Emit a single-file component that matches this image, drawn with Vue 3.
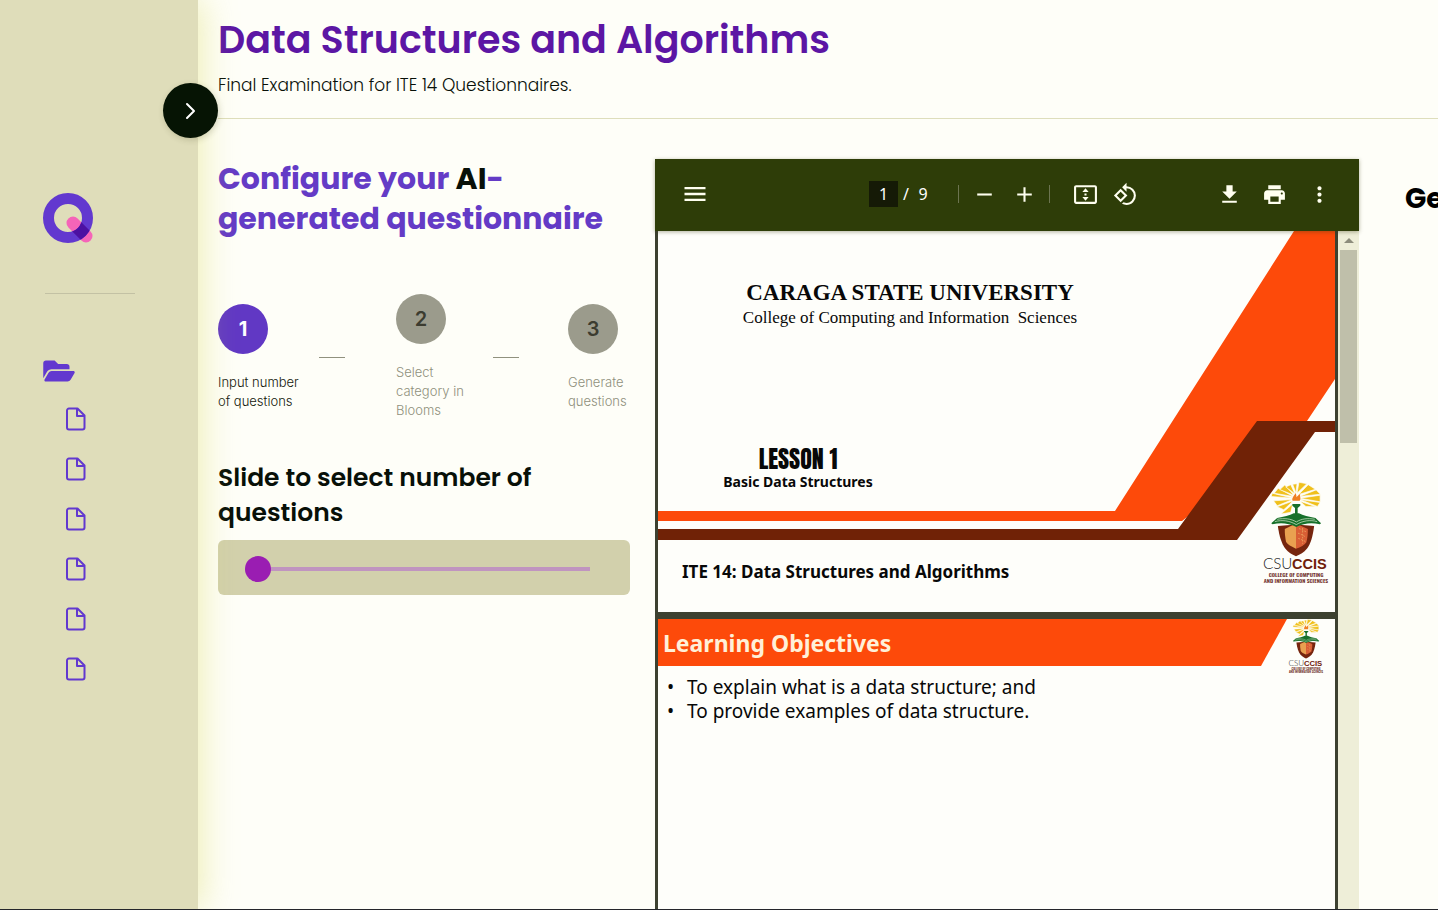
<script setup>
import { ref } from 'vue'

const questionCount = ref(0)
const pageNumber = ref('1')

const files = [1, 2, 3, 4, 5, 6]

const steps = [
  { number: 1, label: 'Input number\nof questions', active: true },
  { number: 2, label: 'Select\ncategory in\nBlooms', active: false },
  { number: 3, label: 'Generate\nquestions', active: false },
]

const objectives = [
  'To explain what is a data structure; and',
  'To provide examples of data structure.',
]
</script>

<template>
  <div class="shell">
    <svg class="defs" aria-hidden="true">
      <defs>
        <g id="emblem">
          <g fill="#f0c01c" stroke="#fefefa" stroke-width="2">
            <path d="M160 84 93 79l3-10z" />
            <path d="M160 79 102 69l12-15z" />
            <path d="M162 75 119 58l15-14z" />
            <path d="M165 71 137 50l15-7z" />
            <path d="M168 69 158 42l13-2z" />
            <path d="M171 69 177 36l24 4z" />
            <path d="M176 73 205 43l22 14z" />
            <path d="M178 79 229 59l13 13z" />
            <path d="M180 84 241 75v20z" />
            <path d="M180 88 241 97l-8 12z" />
            <path d="M180 93 228 110l-30-1z" />
            <path d="M158 88 100 92l11 15z" />
            <path d="M160 92 111 110l20 9z" />
            <path d="M158 102 122 132l30-5z" />
          </g>
          <path fill="#ef7f22" d="M158 92c-4-8 3-14 9-24 2 7 3 9 2 13 5-4 6-8 12-10-3 8 4 14-2 21z" />
          <path fill="#76250e" d="m113 168 56-4 54 4c-4 30-10 54-22 69-9 11-20 17-33 23-13-6-23-12-32-23-12-16-19-39-23-69z" />
          <path fill="#e9a050" d="m134 177 34-16v76c-14-6-26-12-30-20-3-13-4-27-4-40z" />
          <path fill="#d95e35" d="m168 161 36 16c0 14-1 28-5 41-5 8-17 14-31 19z" />
          <path fill="none" stroke="#f0b46a" stroke-width="2" stroke-dasharray="5 4" d="M177 176c10 3 15 8 23 10M174 190c10 3 16 8 25 12M175 206c8 2 14 6 21 9M188 174v48" />
          <path fill="#17702a" d="M157 102h24v5l-8 7v24h-8v-24l-8-7z" />
          <path fill="#17702a" d="m93 160 18-16c20-3 38-8 50-14h16c12 6 30 11 50 14l17 16-4 3c-24-6-48-4-71 8-24-12-48-14-72-8z" />
          <path fill="none" stroke="#e8f3dc" stroke-width="2" d="M104 155c22-6 44-3 65 9 20-12 42-15 63-9M111 148c22-4 42-2 58 8 16-10 34-12 56-8" />
        </g>
      </defs>
    </svg>

    <aside class="sidebar">
      <button class="toggle" type="button" aria-label="Expand sidebar">
        <svg width="11" height="18" viewBox="0 0 11 18" fill="none" stroke="#fff" stroke-width="2" stroke-linecap="round" stroke-linejoin="round"><path d="m2 2 7 7-7 7" /></svg>
      </button>
      <svg class="brand" width="52" height="52" viewBox="0 0 52 52" aria-hidden="true">
        <clipPath id="ring"><path clip-rule="evenodd" d="M26 1a25 25 0 1 1 0 50 25 25 0 0 1 0-50zm0 11a14 14 0 1 0 0 28 14 14 0 0 0 0-28z" /></clipPath>
        <path stroke="#f564b8" stroke-width="13" stroke-linecap="round" d="m31 31 13 13" />
        <circle cx="26" cy="26" r="19.5" fill="none" stroke="#6238cf" stroke-width="11" />
        <path clip-path="url(#ring)" stroke="#4c10a2" stroke-width="13" stroke-linecap="round" d="m31 31 13 13" />
      </svg>
      <hr class="rule" />
      <nav class="tree" aria-label="Files">
        <a class="folder" href="#" aria-label="Folder">
          <svg width="32" height="28" viewBox="0 0 576 512" fill="#6238cf"><path d="M572.694 292.093L500.27 416.248A63.997 63.997 0 0 1 444.989 448H45.025c-18.523 0-30.064-20.093-20.731-36.093l72.424-124.155A64 64 0 0 1 152 256h399.964c18.523 0 30.064 20.093 20.730 36.093zM152 224h328v-48c0-26.510-21.490-48-48-48H272l-64-64H48C21.490 64 0 85.490 0 112v278.046l69.077-118.418C86.214 242.250 117.989 224 152 224z" /></svg>
        </a>
        <a v-for="file in files" :key="file" class="file" href="#" :aria-label="'File ' + file">
          <svg width="20" height="24" viewBox="0 0 20 24" fill="none" stroke="#6238cf" stroke-width="2" stroke-linejoin="round"><path d="M3 1.500h8.500l7 7V20.500a2 2 0 0 1-2 2H3a2 2 0 0 1-2-2v-17a2 2 0 0 1 2-2zM11 1.500v7.500h7.500" /></svg>
        </a>
      </nav>
    </aside>

    <main class="main">
      <header class="header">
        <h1>Data Structures and Algorithms</h1>
        <p>Final Examination for ITE 14 Questionnaires.</p>
      </header>

      <div class="content">
        <section class="config">
          <h2>Configure your <span class="ink">AI</span>-<br />generated questionnaire</h2>
          <ol class="steps">
            <template v-for="step in steps" :key="step.number">
              <li class="step" :class="{ active: step.active }">
                <span class="bubble">{{ step.number }}</span>
                <span class="label">{{ step.label }}</span>
              </li>
              <li v-if="step.number < 3" class="dash" aria-hidden="true"></li>
            </template>
          </ol>
          <label class="prompt" for="count">Slide to select number of questions</label>
          <div class="slider">
            <input id="count" v-model="questionCount" type="range" min="0" max="50" />
          </div>
        </section>

        <section class="viewer" aria-label="Document">
          <div class="toolbar">
            <div class="tools">
              <button type="button" aria-label="Menu"><svg width="28" height="28" viewBox="0 0 24 24"><path d="M3 18h18v-2H3v2zm0-5h18v-2H3v2zm0-7v2h18V6H3z" /></svg></button>
            </div>
            <div class="tools">
              <input v-model="pageNumber" class="page-input" type="text" aria-label="Page number" />
              <span class="slash">/</span>
              <span class="total">9</span>
              <span class="divider"></span>
              <button type="button" aria-label="Zoom out"><svg width="25" height="25" viewBox="0 0 24 24"><path d="M19 13H5v-2h14z" /></svg></button>
              <button type="button" aria-label="Zoom in"><svg width="25" height="25" viewBox="0 0 24 24"><path d="M19 13h-6v6h-2v-6H5v-2h6V5h2v6h6z" /></svg></button>
              <span class="divider second"></span>
              <button type="button" aria-label="Fit to page"><svg width="25" height="25" viewBox="0 0 24 24"><path d="M21 3H3c-1.100 0-2 .9-2 2v14c0 1.100.9 2 2 2h18c1.100 0 2-.9 2-2V5c0-1.100-.9-2-2-2zm0 16H3V5h18v14zM12 6l-3 3.500h6zM12 18l3-3.500H9zM11 11h2v2h-2z" /></svg></button>
              <button type="button" aria-label="Rotate"><svg width="25" height="25" viewBox="0 0 24 24"><path d="M7.340 6.410.86 12.900l6.490 6.480 6.490-6.480-6.500-6.490zM3.690 12.900l3.660-3.660L11 12.900l-3.660 3.660-3.650-3.660zM19.360 6.640A8.950 8.950 0 0 0 13 4V.76L8.760 5 13 9.240V6c1.790 0 3.580.68 4.950 2.050a7.007 7.007 0 0 1 0 9.900 6.973 6.973 0 0 1-7.840 1.440l-1.490 1.490C10.020 21.620 11.510 22 13 22c2.300 0 4.610-.88 6.360-2.640a8.980 8.980 0 0 0 0-12.720z" /></svg></button>
            </div>
            <div class="tools end">
              <button type="button" aria-label="Download"><svg width="25" height="25" viewBox="0 0 24 24"><path d="M19 9h-4V3H9v6H5l7 7 7-7zM5 18v2h14v-2H5z" /></svg></button>
              <button type="button" aria-label="Print"><svg width="25" height="25" viewBox="0 0 24 24"><path d="M19 8H5c-1.660 0-3 1.340-3 3v6h4v4h12v-4h4v-6c0-1.660-1.340-3-3-3zm-3 11H8v-5h8v5zm3-7c-.55 0-1-.45-1-1s.45-1 1-1 1 .45 1 1-.45 1-1 1zm-1-9H6v4h12V3z" /></svg></button>
              <button type="button" aria-label="More"><svg width="25" height="25" viewBox="0 0 24 24"><path d="M12 8c1.100 0 2-.9 2-2s-.9-2-2-2-2 .9-2 2 .9 2 2 2zm0 2c-1.100 0-2 .9-2 2s.9 2 2 2 2-.9 2-2-.9-2-2-2zm0 6c-1.100 0-2 .9-2 2s.9 2 2 2 2-.9 2-2-.9-2-2-2z" /></svg></button>
            </div>
          </div>

          <div class="body">
            <div class="pages">
              <article class="slide">
                <svg class="art" viewBox="0 0 677 381" preserveAspectRatio="none" aria-hidden="true">
                  <path fill="#fd4a0a" d="M636 0h41v148l-28 42-125 100H0v-10h457z" />
                  <path fill="#702206" d="M0 298h520l79-108h78v11h-20l-78 108H0z" />
                </svg>
                <div class="masthead">
                  <strong>CARAGA STATE UNIVERSITY</strong>
                  <span>College of Computing and Information&nbsp; Sciences</span>
                </div>
                <div class="lesson">
                  <strong>LESSON 1</strong>
                  <span>Basic Data Structures</span>
                </div>
                <p class="course">ITE 14: Data Structures and Algorithms</p>
                <svg class="seal" viewBox="65 35 206 312">
                  <use href="#emblem" />
                  <text x="68" y="300" class="csu">CSU</text>
                  <text x="156" y="300" class="ccis">CCIS</text>
                  <text x="168" y="324" class="tiny">COLLEGE OF COMPUTING</text>
                  <text x="168" y="342" class="tiny">AND INFORMATION SCIENCES</text>
                </svg>
              </article>
              <article class="slide">
                <svg class="art" viewBox="0 0 677 381" preserveAspectRatio="none" aria-hidden="true">
                  <path fill="#fd4a0a" d="M0 0h629l-26 47H0z" />
                </svg>
                <h3>Learning Objectives</h3>
                <ul class="objectives">
                  <li v-for="item in objectives" :key="item">{{ item }}</li>
                </ul>
                <svg class="seal small" viewBox="65 35 206 312">
                  <use href="#emblem" />
                  <text x="68" y="300" class="csu">CSU</text>
                  <text x="156" y="300" class="ccis">CCIS</text>
                  <text x="168" y="324" class="tiny">COLLEGE OF COMPUTING</text>
                  <text x="168" y="342" class="tiny">AND INFORMATION SCIENCES</text>
                </svg>
              </article>
            </div>
            <div class="scroll" aria-hidden="true">
              <span class="arrow"></span>
              <span class="thumb"></span>
            </div>
          </div>
        </section>

        <section class="results">
          <h2>Ge</h2>
        </section>
      </div>
    </main>
  </div>
</template>

<style>
body {
  margin: 0;
  background: #fefef8;
}
</style>

<style scoped>
* {
  box-sizing: border-box;
}

.shell {
  display: flex;
  height: 100vh;
  overflow: hidden;
  border-bottom: 1px solid #25262b;
  background: #fefef8;
  font-family: Poppins, Inter, sans-serif;
  color: #081008;
}

.defs {
  position: absolute;
  width: 0;
  height: 0;
}

.sidebar {
  position: relative;
  z-index: 1;
  flex: none;
  width: 198px;
  padding: 192px 42px 0;
  background: #dfddba;
  box-shadow: 4px 0 32px rgba(215, 215, 80, 0.4);
}

.toggle {
  position: absolute;
  top: 83px;
  right: -20px;
  display: flex;
  align-items: center;
  justify-content: center;
  width: 55px;
  height: 55px;
  padding: 0;
  border: 0;
  border-radius: 50%;
  background: #061404;
  box-shadow: 1px 2px 6px rgba(60, 60, 20, 0.2);
}

.brand {
  display: block;
}

.rule {
  width: 90px;
  height: 1px;
  margin: 49px 0 0 3px;
  border: 0;
  background: #c3c1a4;
}

.tree {
  display: flex;
  flex-direction: column;
  align-items: flex-start;
  margin-top: 63px;
}

.folder {
  height: 28px;
  margin: 0 0 22px 1px;
}

.file {
  height: 24px;
  margin: 0 0 26px 24px;
}

.tree svg {
  display: block;
}

.main {
  flex: 1;
  display: flex;
  flex-direction: column;
  min-width: 0;
  padding-left: 20px;
}

.header {
  flex: none;
  height: 119px;
  padding-top: 16px;
  border-bottom: 1px solid #dedebc;
}

h1 {
  margin: 0;
  font-size: 38px;
  line-height: 48px;
  font-weight: 600;
  color: #5c16a4;
}

.header p {
  margin: 8px 0 0;
  font-size: 17px;
  line-height: 26px;
  font-weight: 300;
}

.content {
  flex: 1;
  display: flex;
  min-height: 0;
  padding-top: 40px;
}

h2 {
  margin: 0;
  font-size: 30px;
  line-height: 40px;
  font-weight: 700;
  white-space: nowrap;
  color: #643bc6;
}

.ink {
  color: #081008;
}

.config {
  flex: 412 1 0;
  min-width: 0;
  margin-right: 25px;
}

.steps {
  display: grid;
  grid-template-columns: 101fr 77fr 97fr 75fr 62fr;
  align-items: center;
  margin: 55px 0 40px;
  padding: 0;
  list-style: none;
  font-family: Inter, sans-serif;
}

.step {
  display: flex;
  flex-direction: column;
  gap: 19px;
  color: #8f907c;
}

.bubble {
  display: flex;
  align-items: center;
  justify-content: center;
  width: 50px;
  height: 50px;
  border-radius: 50%;
  background: #9b9b8c;
  font-size: 20px;
  font-weight: 600;
  color: #3c3c30;
}

.label {
  font-size: 13px;
  line-height: 19px;
  font-weight: 300;
  white-space: pre;
}

.active {
  color: #14180c;
}

.active .bubble {
  background: #6138c4;
  font-weight: 700;
  color: #fff;
}

.dash {
  width: 26px;
  height: 1px;
  background: #90917e;
}

.prompt {
  display: block;
  font-size: 25px;
  line-height: 35px;
  font-weight: 600;
}

.slider {
  display: flex;
  align-items: center;
  height: 55px;
  margin-top: 10px;
  padding: 2px 40px 0 27px;
  border-radius: 6px;
  background: #d2d0ac;
}

.slider input {
  appearance: none;
  width: 100%;
  height: 26px;
  margin: 0;
  background: linear-gradient(#c094c0, #c094c0) center / 100% 4px no-repeat;
}

.slider input::-webkit-slider-thumb {
  appearance: none;
  width: 26px;
  height: 26px;
  border-radius: 50%;
  background: #9a1db2;
}

.viewer {
  flex: 704 1 0;
  display: flex;
  flex-direction: column;
  min-width: 0;
  background: #3d4130;
}

.toolbar {
  position: relative;
  z-index: 1;
  flex: none;
  display: grid;
  grid-template-columns: 1fr auto 1fr;
  align-items: center;
  height: 72px;
  padding: 0 20px 2px;
  background: #2e3d08;
  box-shadow: 0 1px 4px rgba(60, 60, 20, 0.4);
  font-family: "Noto Sans", sans-serif;
  font-size: 16px;
  color: #fff;
}

.tools {
  display: flex;
  align-items: center;
}

.tools button {
  display: flex;
  align-items: center;
  justify-content: center;
  width: 40px;
  height: 40px;
  padding: 0;
  border: 0;
  background: none;
}

.tools svg {
  fill: #fffff0;
}

.end {
  justify-content: flex-end;
  gap: 5px;
}

.page-input {
  width: 29px;
  height: 26px;
  padding: 0;
  border: 0;
  background: #151a06;
  font: inherit;
  text-align: center;
  color: #fff;
}

.slash {
  width: 16px;
  text-align: center;
}

.total {
  width: 18px;
  text-align: center;
}

.divider {
  width: 1px;
  height: 18px;
  margin: 0 5px 0 26px;
  background: #6c7450;
}

.second {
  margin: 0 15px 0 5px;
}

.body {
  flex: 1;
  display: flex;
  min-height: 0;
}

.pages {
  flex: 1;
  min-width: 0;
  padding: 0 3px;
}

.slide {
  position: relative;
  height: 381px;
  margin-bottom: 7px;
  overflow: hidden;
  background: #fefefa;
  font-family: "Noto Sans", sans-serif;
  color: #080808;
}

.art {
  position: absolute;
  inset: 0;
  width: 100%;
  height: 100%;
}

.masthead {
  position: relative;
  display: flex;
  flex-direction: column;
  align-items: center;
  padding: 49px 173px 0 0;
  font-family: "Liberation Serif", serif;
  font-size: 17px;
  line-height: 25px;
  white-space: nowrap;
}

.masthead strong {
  font-size: 23px;
}

.lesson {
  position: relative;
  display: flex;
  flex-direction: column;
  align-items: center;
  width: 280px;
  margin-top: 115px;
  font-size: 14px;
  line-height: 18px;
  font-weight: 700;
}

.lesson strong {
  font-family: Impact, Anton, "DejaVu Sans Condensed", sans-serif;
  font-size: 24px;
  line-height: 28px;
  font-weight: 400;
}

.course {
  position: relative;
  margin: 69px 0 0 24px;
  font-size: 17px;
  line-height: 24px;
  font-weight: 700;
}

.seal {
  position: absolute;
  top: 251px;
  right: 5px;
  width: 68px;
  height: 103px;
}

.small {
  top: 0;
  right: 11px;
  width: 36px;
  height: 55px;
}

.csu {
  font-family: Lato, sans-serif;
  font-size: 46px;
  font-weight: 300;
  fill: #222;
}

.ccis {
  font-family: "Liberation Sans", sans-serif;
  font-size: 44px;
  font-weight: 700;
  fill: #70200a;
}

.tiny {
  font-family: Oswald, "Roboto Condensed", "DejaVu Sans Condensed", sans-serif;
  font-size: 17px;
  font-weight: 600;
  text-anchor: middle;
  fill: #70302a;
}

h3 {
  position: relative;
  margin: 0;
  padding-left: 5px;
  font-size: 23px;
  line-height: 48px;
  color: #fff0d8;
}

.objectives {
  position: relative;
  margin: 8px 0 0;
  padding: 0;
  list-style: none;
  font-size: 19px;
  line-height: 24px;
}

.objectives li {
  display: flex;
}

.objectives li::before {
  content: "•";
  width: 20px;
  padding-left: 9px;
}

.scroll {
  display: flex;
  flex-direction: column;
  align-items: center;
  width: 21px;
  padding-top: 7px;
  background: #eeeed8;
}

.arrow {
  border: 5px solid transparent;
  border-top: 0;
  border-bottom: 5px solid #8d8d7c;
}

.thumb {
  width: 17px;
  height: 193px;
  margin-top: 7px;
  background: #bfbfaa;
}

.results {
  flex: none;
  width: 33px;
  margin-left: 46px;
  padding-top: 20px;
  overflow: hidden;
}

.results h2 {
  font-size: 28px;
  color: #000;
}
</style>
